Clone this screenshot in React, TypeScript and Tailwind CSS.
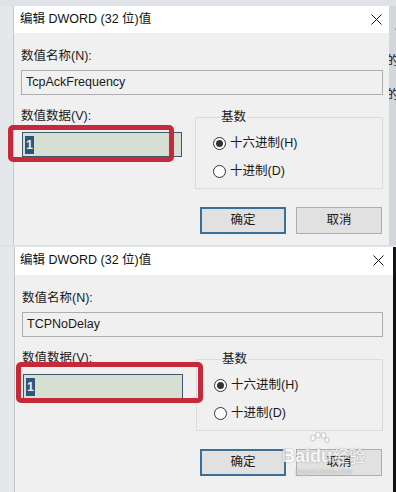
const Close = () => (
  <svg width="11" height="11" viewBox="0 0 11 11">
    <path d="M0.5 0.5 L10.5 10.5 M10.5 0.5 L0.5 10.5" stroke="#111" strokeWidth="1" />
  </svg>
)

const Radio = ({ checked, label }: { checked?: boolean; label: string }) => (
  <div className="flex items-center gap-[4px] h-[16px]">
    <span className="w-[13px] h-[13px] rounded-full border border-[#333] bg-white flex items-center justify-center shrink-0">
      {checked && <span className="w-[7px] h-[7px] rounded-full bg-[#333]" />}
    </span>
    <span>{label}</span>
  </div>
)

type DialogProps = {
  name: string
  frame: string
  body: string
  title: string
  red: string
}

const Dialog = ({ name, frame, body, title, red }: DialogProps) => (
  <div className={`relative bg-[#f0f0f0] border-l border-[#c3c8cd] flex flex-col ${frame}`}>
    <div className={`h-[27px] bg-white flex items-center justify-between pb-[1px] ${title}`}>
      <span className="text-[12.5px] text-[#111]">编辑 DWORD (32 位)值</span>
      <Close />
    </div>

    <div className={`flex flex-col pl-[7px] pt-[15px] ${body}`}>
      <div className="h-[16px] leading-[16px]">数值名称(N):</div>
      <div className="mt-[6px] h-[25px] border border-[#adadad] bg-[#f0f0f0] flex items-center pl-[4px]">
        {name}
      </div>

      <div className="flex mt-[13px]">
        <div className="w-[174px] flex flex-col">
          <div className="h-[16px] leading-[16px]">数值数据(V):</div>
          <div className="relative mt-[8px] ml-[1px] w-[160px] h-[25px] border border-[#3f566b] bg-[#d5e0d3] flex items-center pl-[2px]">
            <span className="bg-[#30557c] text-[#e8eef4] h-[18px] leading-[18px] px-[1px] font-bold">1</span>
            <div className={`absolute z-10 rounded-[5px] border-[5px] border-[#c62a3a] ${red}`} />
          </div>
        </div>

        <fieldset className="flex-1 mt-[1px] h-[80px] border border-[#dcdcdc] pl-[17px]">
          <legend className="ml-[7px] px-[1px] h-[16px] leading-[16px]">基数</legend>
          <div className="mt-[10px] flex flex-col gap-[12px]">
            <Radio checked label="十六进制(H)" />
            <Radio label="十进制(D)" />
          </div>
        </fieldset>
      </div>

      <div className="flex justify-end gap-[10px] mt-[18px] mr-[1px]">
        <div className="w-[86px] h-[27px] border-2 border-[#3b6f98] bg-[#e1e1e1] flex items-center justify-center">确定</div>
        <div className="w-[86px] h-[27px] border border-[#adadad] bg-[#e1e1e1] flex items-center justify-center">取消</div>
      </div>
    </div>
  </div>
)

const App = () => {
  return (
    <div className="w-[396px] h-[492px] overflow-hidden bg-[#e5e7ea] flex flex-col text-[12.5px] text-[#1a1a1a] font-['Liberation_Sans','Noto_Sans_CJK_SC',sans-serif]">
      <div className="h-[6px] shrink-0 bg-[#dfe2e6]" />

      <div className="flex h-[239px] shrink-0">
        <div className="w-[13px] shrink-0" />
        <Dialog
          name="TcpAckFrequency"
          frame="w-[376px] h-[239px]"
          body="pr-[6px]"
          title="pl-[6px] pr-[7px]"
          red="-left-[15px] -top-[8px] w-[166px] h-[37px]"
        />
        <div className="flex-1 bg-[#d3d6da] flex flex-col items-end pt-[14px] gap-[22px] text-[#111] overflow-hidden">
          <span className="-mr-[3px] leading-none">/</span>
          <span className="-mr-[3px] leading-none">的</span>
          <span className="-mr-[3px] leading-none">的</span>
        </div>
      </div>

      <div className="h-[2px] shrink-0 bg-[#dde0e4]" />

      <div className="flex flex-1">
        <div className="w-[14px] shrink-0" />
        <div className="relative">
          <Dialog
            name="TCPNoDelay"
            frame="w-[379px] h-full"
            body="pr-[10px]"
            title="pl-[5px] pr-[9px] h-[28px]"
            red="-left-[8px] -top-[13px] w-[187px] h-[41px]"
          />
          <div className="absolute left-[268px] top-[200px] flex flex-col items-center text-white opacity-75 [text-shadow:0_0_2px_#888]">
            <div className="flex items-end leading-none">
              <span className="text-[18px] font-bold">Bai</span>
              <span className="relative text-[18px] font-bold">
                <svg className="absolute -top-[16px] left-[-2px]" width="22" height="16" viewBox="0 0 22 16">
                  <g fill="#fff" stroke="#aaa" strokeWidth="0.8">
                    <ellipse cx="5" cy="7" rx="2.4" ry="3" />
                    <ellipse cx="10" cy="4" rx="2.4" ry="3" />
                    <ellipse cx="15.5" cy="4.5" rx="2.4" ry="3" />
                    <ellipse cx="19" cy="9" rx="2" ry="2.6" />
                  </g>
                </svg>
                du
              </span>
              <span className="text-[16px] ml-[1px]">经验</span>
            </div>
            <span className="text-[7px] mt-[2px] text-[#ddd]">jingyan.baidu.com</span>
          </div>
        </div>
        <div className="flex-1 bg-[#121212]" />
      </div>
    </div>
  )
}

export default App
